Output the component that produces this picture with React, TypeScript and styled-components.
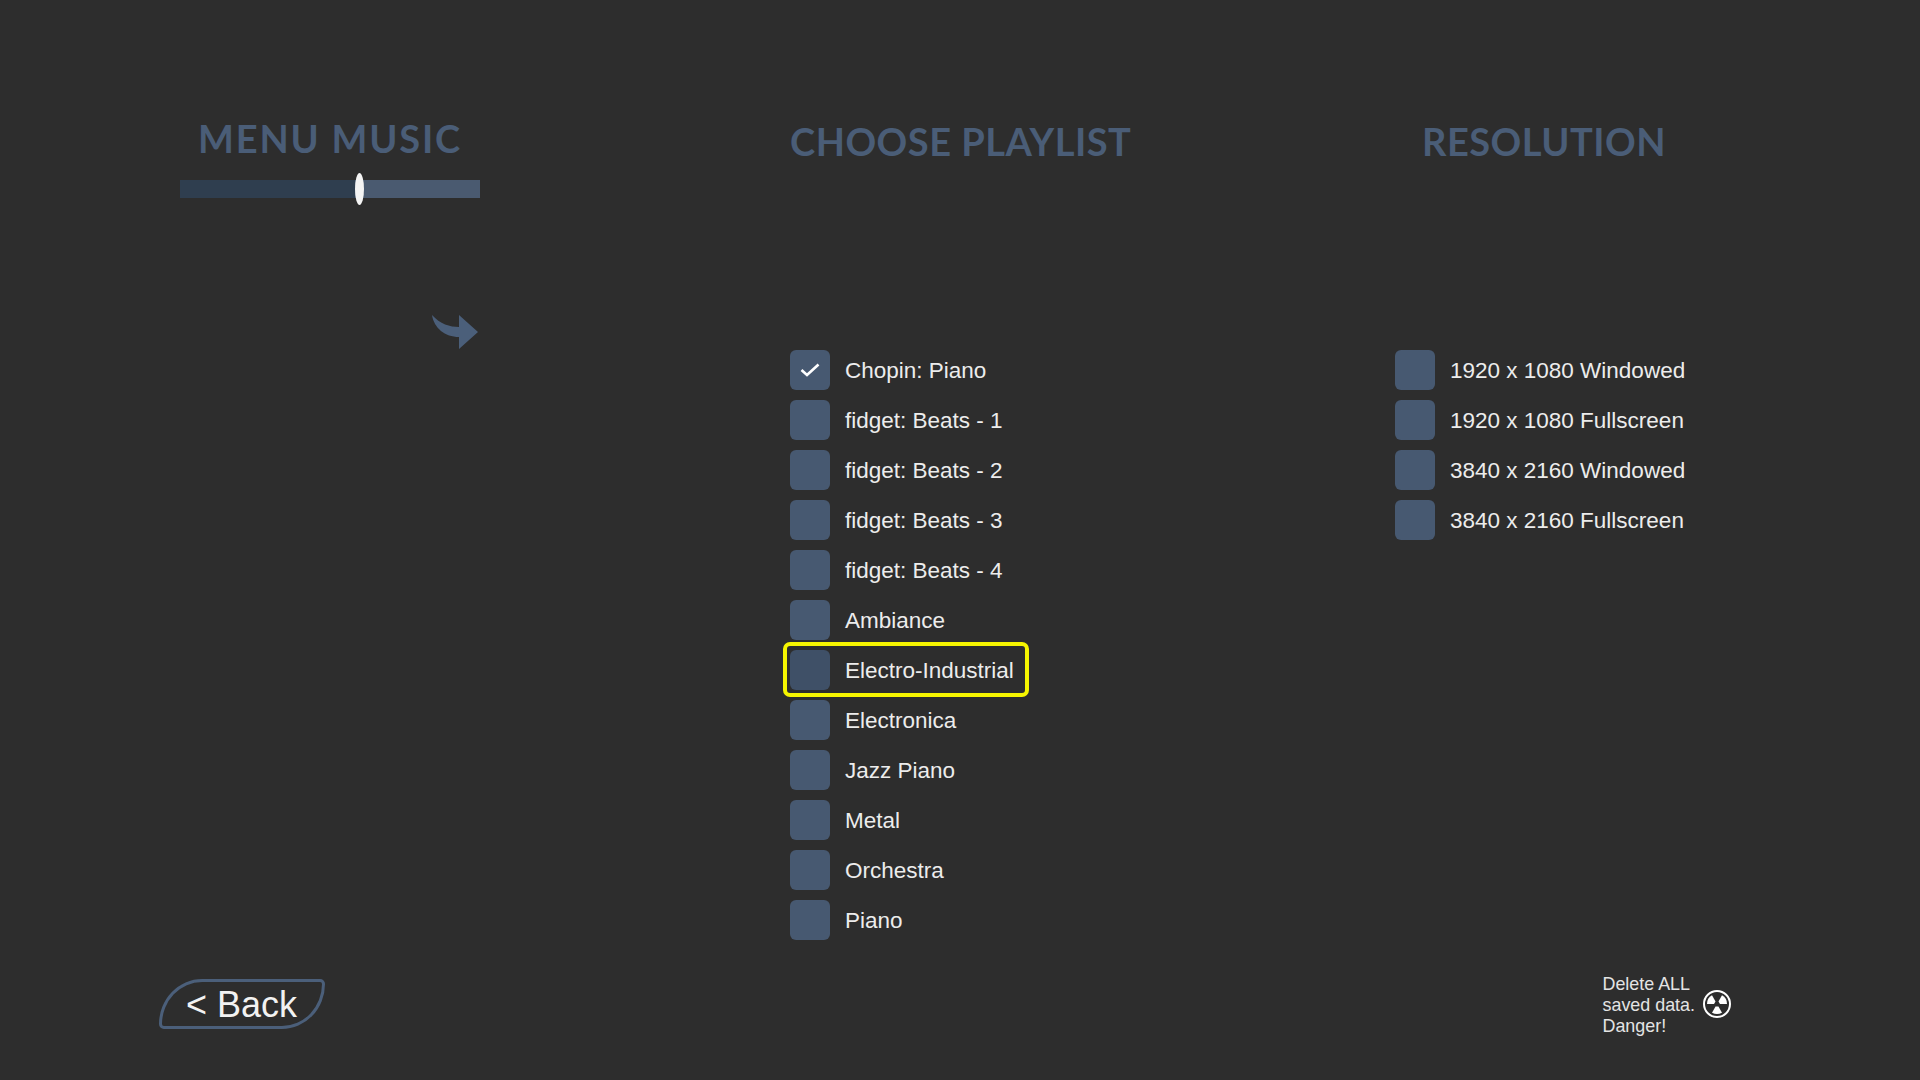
import styled, { createGlobalStyle } from 'styled-components';

const GlobalStyle = createGlobalStyle`
  html, body {
    margin: 0;
    padding: 0;
    background-color: #2d2d2d;
  }
`;

const Page = styled.div`
  width: 1920px;
  height: 1080px;
  overflow: hidden;
  background-color: #2d2d2d;
  color: #ececec;
  font-family: "Liberation Sans", Arial, sans-serif;
  display: flex;
  flex-direction: column;
`;

const Columns = styled.div`
  display: grid;
  grid-template-columns: 300px 340px 298px;
  column-gap: 310px;
  justify-content: start;
  padding-left: 180px;
  height: 945px;
`;

const ColumnsRight = styled.div`
  width: 298px;
  margin-left: -45px;
`;

const Column = styled.div`
  display: flex;
  flex-direction: column;
`;

const Title = styled.h2<{ $top: number; $spacing: number }>`
  margin: 0;
  padding-top: ${({ $top }) => $top}px;
  height: 44px;
  line-height: 44px;
  box-sizing: content-box;
  text-align: center;
  font-family: Lato, "Noto Sans", sans-serif;
  font-size: 38px;
  font-weight: 700;
  letter-spacing: ${({ $spacing }) => $spacing}px;
  white-space: nowrap;
  color: #4a5d77;
`;

const Slider = styled.div`
  position: relative;
  height: 18px;
  margin-top: 20px;
  background-color: #4a5a70;
`;

const SliderFill = styled.div<{ $value: number }>`
  width: ${({ $value }) => $value}%;
  height: 100%;
  background-color: #2f3e4f;
`;

const SliderThumb = styled.div<{ $value: number }>`
  position: absolute;
  left: ${({ $value }) => $value}%;
  top: -7px;
  width: 9px;
  height: 32px;
  border-radius: 50%;
  background-color: #f4f4f4;
`;

const ArrowRow = styled.div`
  display: flex;
  justify-content: flex-end;
  margin-top: 117px;
  padding-right: 2px;
`;

const List = styled.div`
  display: flex;
  flex-direction: column;
  gap: 10px;
  margin-top: 187px;
`;

const Row = styled.div`
  position: relative;
  display: flex;
  align-items: center;
  gap: 15px;
  height: 40px;
  font-size: 22.5px;
  white-space: nowrap;
`;

const Label = styled.span`
  margin-top: 1px;
`;

const Box = styled.div<{ $focused?: boolean }>`
  width: 40px;
  height: 40px;
  border-radius: 6px;
  background-color: ${({ $focused }) => ($focused ? '#3f5067' : '#475971')};
  display: flex;
  align-items: center;
  justify-content: center;
  flex-shrink: 0;
`;

const Highlight = styled.div`
  position: absolute;
  left: -7px;
  top: -8px;
  width: 246px;
  height: 55px;
  box-sizing: border-box;
  border: 4px solid #f6f500;
  border-radius: 7px;
  pointer-events: none;
`;

const Footer = styled.div`
  display: flex;
  justify-content: space-between;
  align-items: center;
  padding: 25px 188px 0 159px;
`;

const BackButton = styled.button`
  width: 166px;
  height: 50px;
  box-sizing: border-box;
  padding: 1px 0 0 24px;
  background: transparent;
  border: 3px solid #4b5f7a;
  border-radius: 44px 5px 44px 5px / 46px 5px 46px 5px;
  color: #f2f2f2;
  font-family: "Liberation Sans", Arial, sans-serif;
  font-size: 36px;
  line-height: 44px;
  text-align: left;
  white-space: nowrap;
`;

const DangerZone = styled.div`
  display: flex;
  align-items: center;
  gap: 7px;
`;

const DangerText = styled.div`
  margin-top: 4px;
  font-size: 17.9px;
  line-height: 21px;
  color: #e4e4e4;
`;

const blade = (mid: number) => {
  const pt = (r: number, deg: number) => {
    const a = (deg * Math.PI) / 180;
    return `${(15 + r * Math.cos(a)).toFixed(2)} ${(15 + r * Math.sin(a)).toFixed(2)}`;
  };
  return `M${pt(3, mid - 30)} L${pt(10, mid - 30)} A10 10 0 0 1 ${pt(10, mid + 30)} L${pt(3, mid + 30)} Z`;
};

const playlists = [
  'Chopin: Piano',
  'fidget: Beats - 1',
  'fidget: Beats - 2',
  'fidget: Beats - 3',
  'fidget: Beats - 4',
  'Ambiance',
  'Electro-Industrial',
  'Electronica',
  'Jazz Piano',
  'Metal',
  'Orchestra',
  'Piano',
];

const resolutions = [
  '1920 x 1080 Windowed',
  '1920 x 1080 Fullscreen',
  '3840 x 2160 Windowed',
  '3840 x 2160 Fullscreen',
];

export default function App() {
  return (
    <Page>
      <GlobalStyle />
      <Columns>
        <Column>
          <Title $top={116} $spacing={1.8}>MENU MUSIC</Title>
          <Slider>
            <SliderFill $value={58.3} />
            <SliderThumb $value={58.3} />
          </Slider>
          <ArrowRow>
            <svg width="46" height="36" viewBox="272 215 46 36">
              <path
                d="M272 215 C280 224 290 227 299 227 L299 215 L318 232 L299 249 L299 237 C285 237 274 228 272 215 Z"
                fill="#4b5f7a"
              />
            </svg>
          </ArrowRow>
        </Column>

        <Column>
          <Title $top={119} $spacing={0.5}>CHOOSE PLAYLIST</Title>
          <List>
            {playlists.map((name) => (
              <Row key={name}>
                <Box $focused={name === 'Electro-Industrial'}>
                  {name === 'Chopin: Piano' && (
                    <svg width="20" height="14" viewBox="0 0 20 14">
                      <path d="M1.5 7 L7 12 L18.5 1.5" fill="none" stroke="#fff" strokeWidth="2.6" />
                    </svg>
                  )}
                </Box>
                <Label>{name}</Label>
                {name === 'Electro-Industrial' && <Highlight />}
              </Row>
            ))}
          </List>
        </Column>

        <ColumnsRight>
          <Column>
            <Title $top={119} $spacing={0.5}>RESOLUTION</Title>
            <List>
              {resolutions.map((name) => (
                <Row key={name}>
                  <Box />
                  <Label>{name}</Label>
                </Row>
              ))}
            </List>
          </Column>
        </ColumnsRight>
      </Columns>

      <Footer>
        <BackButton>&lt; Back</BackButton>
        <DangerZone>
          <DangerText>
            Delete ALL
            <br />
            saved data.
            <br />
            Danger!
          </DangerText>
          <svg width="30" height="30" viewBox="0 0 30 30">
            <circle cx="15" cy="15" r="13" fill="none" stroke="#fff" strokeWidth="2" />
            <path d={blade(-150)} fill="#fff" />
            <path d={blade(-30)} fill="#fff" />
            <path d={blade(90)} fill="#fff" />
          </svg>
        </DangerZone>
      </Footer>
    </Page>
  );
}
